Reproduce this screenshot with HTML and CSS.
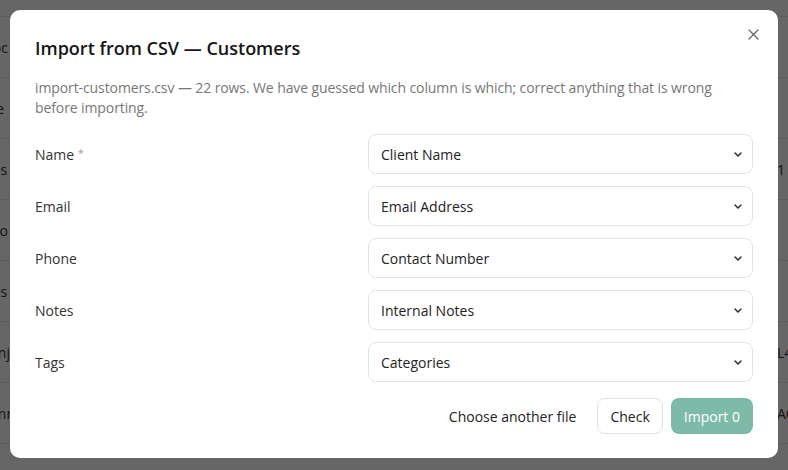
FILE: index.html
```html
<!DOCTYPE html>
<html lang="en">
<head>
<meta charset="utf-8">
<title>Customers</title>
<link rel="stylesheet" href="styles.css">
</head>
<body>
<div class="page">
  <div class="table">
    <div class="row head"><span class="c1">Contact</span><span class="c2 mid">Address</span></div>
    <div class="row"><span class="c1">Joc</span><span class="c2"></span></div>
    <div class="row"><span class="c1">Le</span><span class="c2"></span></div>
    <div class="row"><span class="c1">Jes</span><span class="c2">1 Elm</span></div>
    <div class="row"><span class="c1">No</span><span class="c2"></span></div>
    <div class="row"><span class="c1">Jes</span><span class="c2"></span></div>
    <div class="row"><span class="c1">Anj</span><span class="c2">L4</span></div>
    <div class="row"><span class="c1">Ann</span><span class="c2">AC</span></div>
    <div class="row"><span class="c1"></span><span class="c2"></span></div>
  </div>
</div>
<div class="overlay"></div>
<div class="modal">
  <button class="close" aria-label="Close">
    <svg width="11" height="11" viewBox="0 0 11 11"><path d="M1 1L10 10M10 1L1 10" stroke="#666" stroke-width="1.3" fill="none" stroke-linecap="round"/></svg>
  </button>
  <h2 class="title">Import from CSV — Customers</h2>
  <p class="desc">import-customers.csv — 22 rows. We have guessed which column is which; correct anything that is wrong before importing.</p>
  <div class="fields">
    <label class="lbl">Name <span class="req">*</span></label>
    <select class="sel"><option>Client Name</option></select>
    <label class="lbl">Email</label>
    <select class="sel"><option>Email Address</option></select>
    <label class="lbl">Phone</label>
    <select class="sel"><option>Contact Number</option></select>
    <label class="lbl">Notes</label>
    <select class="sel"><option>Internal Notes</option></select>
    <label class="lbl">Tags</label>
    <select class="sel"><option>Categories</option></select>
  </div>
  <div class="footer">
    <button class="btn link">Choose another file</button>
    <button class="btn outline">Check</button>
    <button class="btn primary">Import 0</button>
  </div>
</div>
</body>
</html>
```
FILE: styles.css
```css
* { box-sizing: border-box; }
html, body { margin: 0; height: 100%; }
body {
  font-family: "Open Sans", "Lato", sans-serif;
  background: #fff;
  color: #222;
  overflow: hidden;
}
.page { height: 470px; overflow: hidden; }
.table { margin-top: -44px; margin-left: -11px; width: 826px; }
.row {
  display: flex;
  align-items: center;
  height: 61px;
  border-bottom: 1px solid #e6e6e6;
  font-size: 14px;
  color: #333;
}
.row.head { align-items: flex-end; padding-bottom: 16px; font-weight: 600; }
.c1 { width: 788px; }
.c2 { flex: 1; }
.c2.mid { position: relative; left: -310px; }
.overlay {
  position: fixed;
  inset: 0;
  background: rgba(0, 0, 0, 0.6);
}
.modal {
  position: fixed;
  top: 10px;
  left: 10px;
  width: 768px;
  height: 448px;
  background: #fff;
  border-radius: 10px;
  padding: 25px 25px 24px;
  display: flex;
  flex-direction: column;
}
.close {
  position: absolute;
  top: 18px;
  right: 19px;
  width: 12px;
  height: 12px;
  padding: 0;
  border: 0;
  background: none;
  display: flex;
  align-items: center;
  justify-content: center;
}
.title {
  margin: 0;
  font-size: 18px;
  line-height: 26px;
  font-weight: 550;
  color: #151515;
}
.desc {
  margin: 17px 0 0;
  font-size: 14px;
  line-height: 20px;
  color: #777;
  letter-spacing: -0.1px;
}
.fields {
  margin-top: 16px;
  display: grid;
  grid-template-columns: 1fr 385px;
  column-gap: 10px;
  row-gap: 12px;
  align-items: center;
}
.lbl { font-size: 14px; color: #333; }
.req { color: #999; font-size: 11px; vertical-align: 3px; }
.sel {
  -webkit-appearance: none;
  appearance: none;
  height: 40px;
  border: 1px solid #e3e3e3;
  border-radius: 8px;
  background-color: #fff;
  background-image: url("data:image/svg+xml,%3Csvg xmlns='http://www.w3.org/2000/svg' width='8' height='5' viewBox='0 0 8 5'%3E%3Cpath d='M1 1l3 3 3-3' fill='none' stroke='%23222' stroke-width='1.4' stroke-linecap='round' stroke-linejoin='round'/%3E%3C/svg%3E");
  background-repeat: no-repeat;
  background-position: right 10px center;
  background-size: 8px 5px;
  padding: 0 28px 0 12px;
  font-family: inherit;
  font-size: 14px;
  color: #222;
}
.footer {
  margin-top: 16px;
  display: flex;
  justify-content: flex-end;
  gap: 8px;
}
.btn {
  height: 36px;
  border-radius: 8px;
  font-family: inherit;
  font-size: 14px;
  padding: 0 12px;
  background: #fff;
  border: 1px solid transparent;
  color: #222;
}
.btn.outline { border-color: #e0e0e0; }
.btn.primary { background: #7dbba8; color: #fff; }
```
